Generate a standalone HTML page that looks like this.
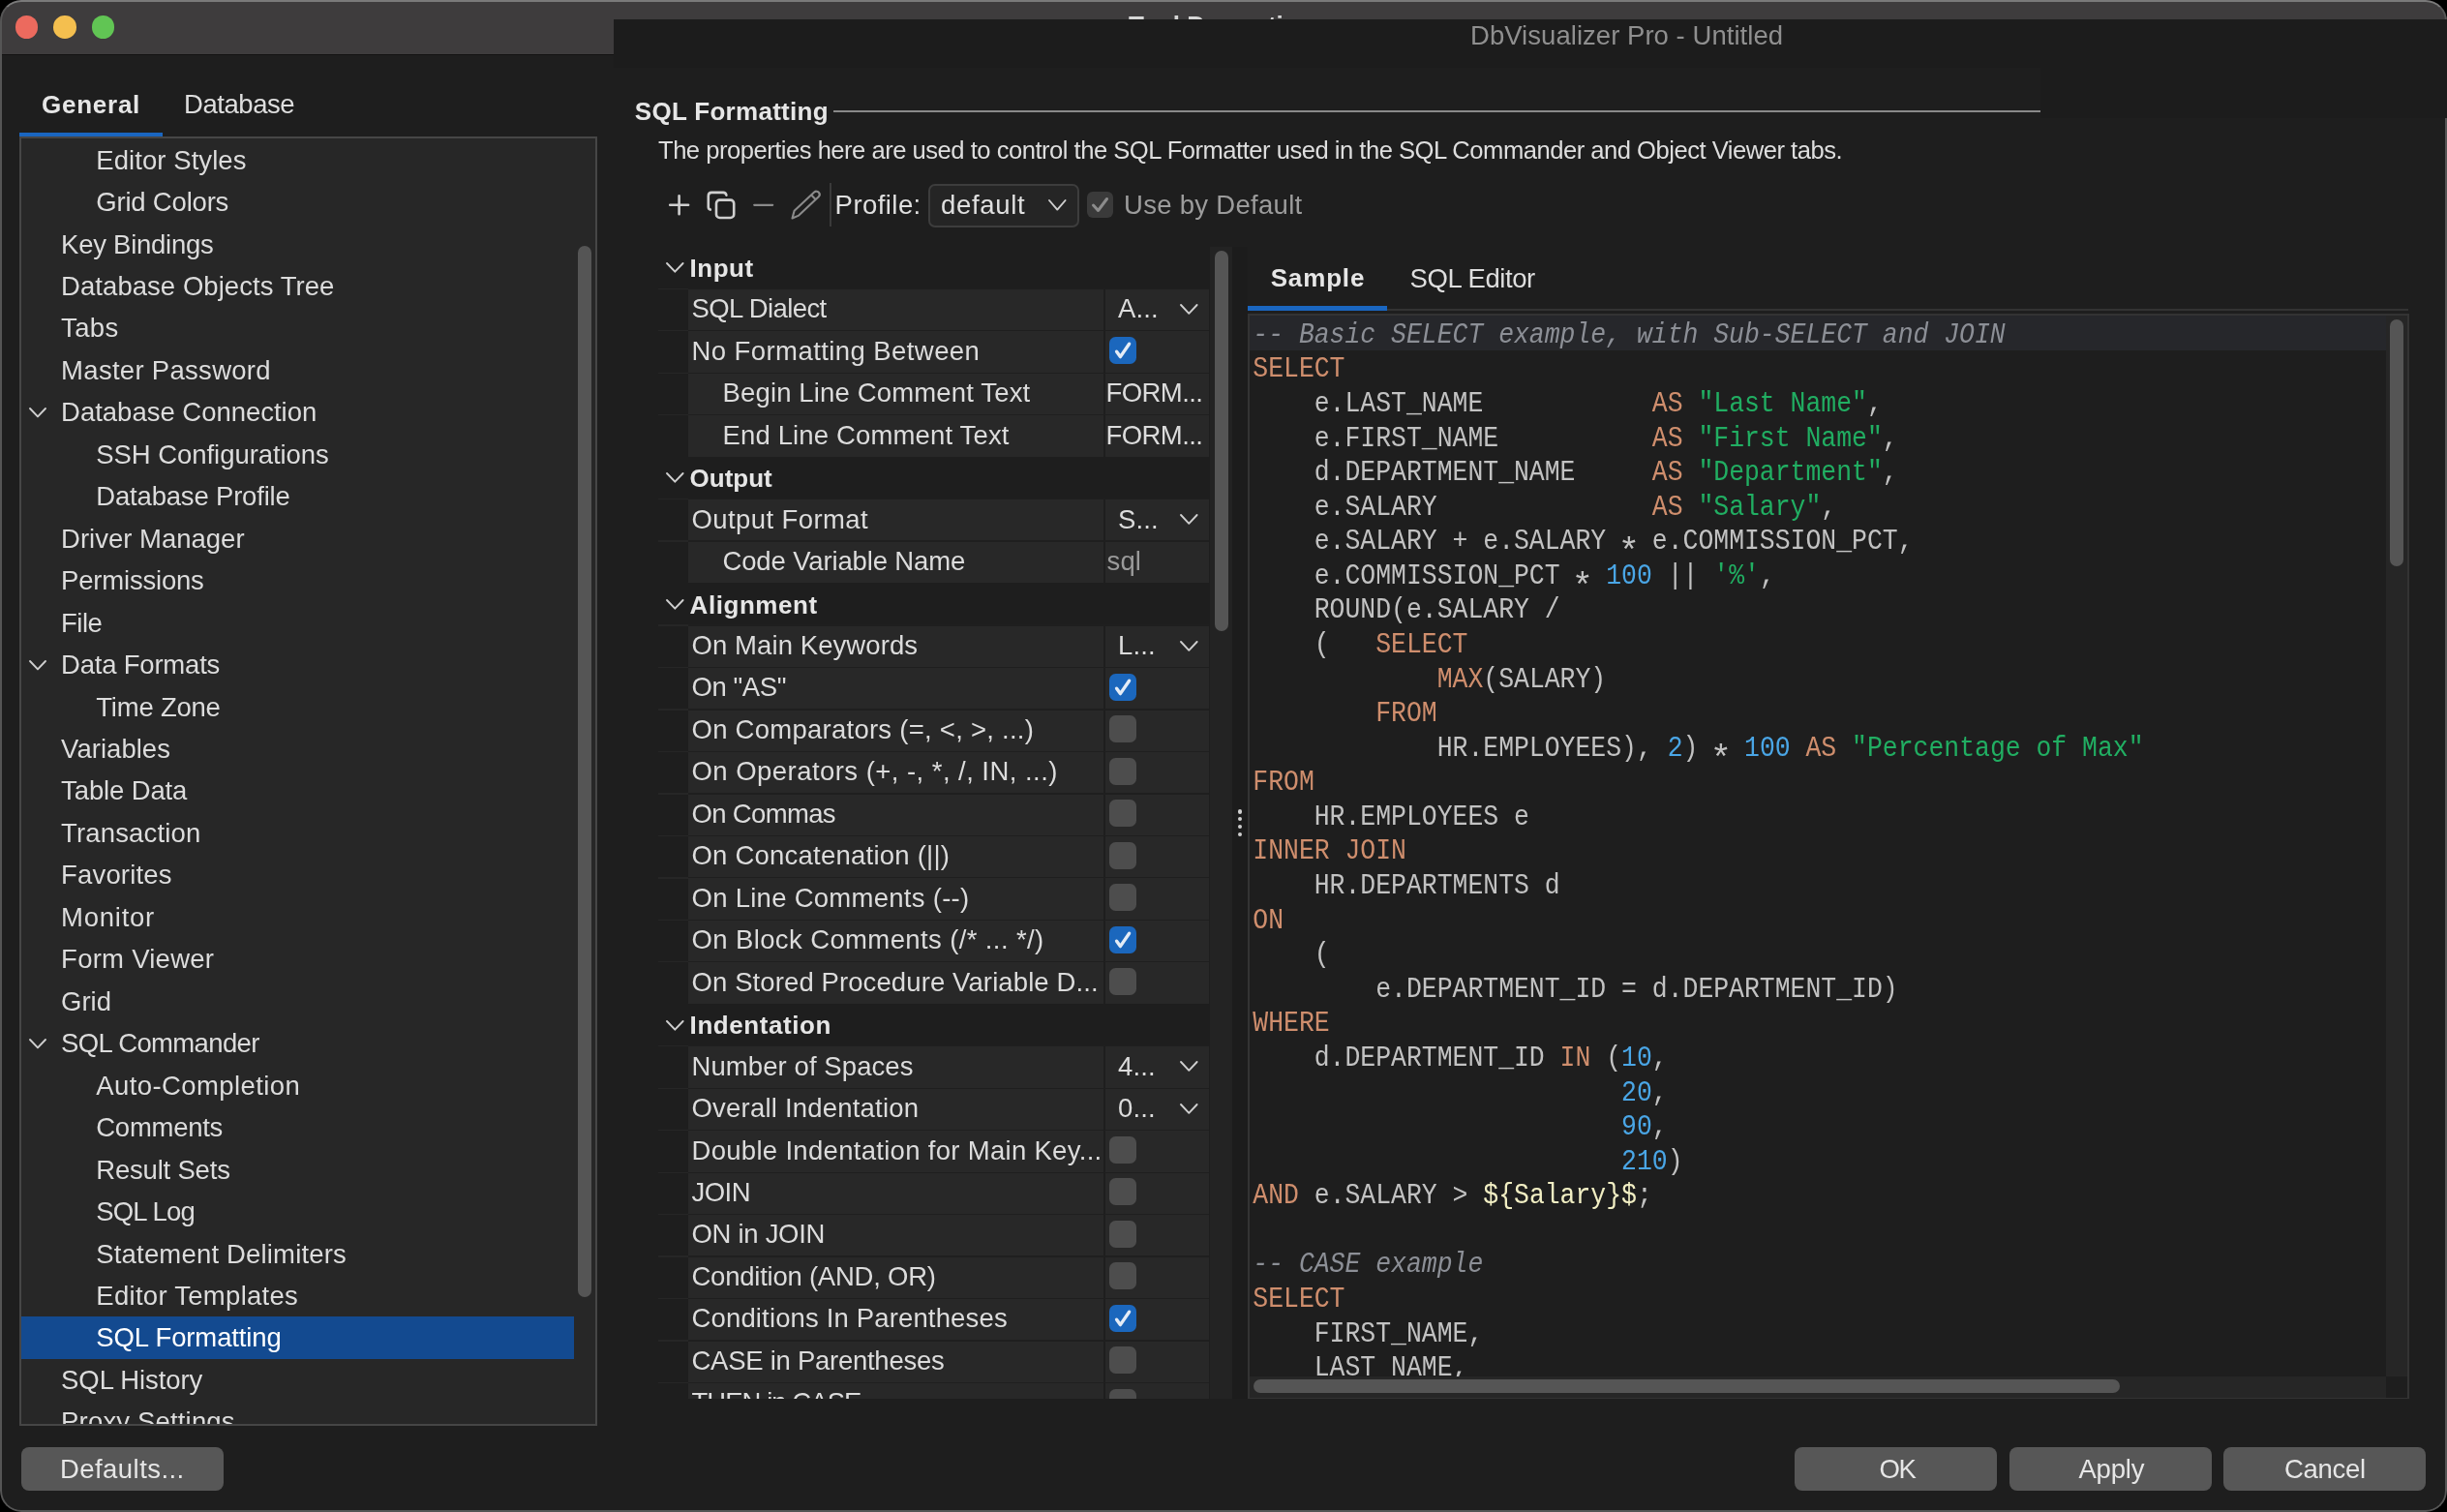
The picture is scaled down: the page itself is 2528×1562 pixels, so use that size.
<!DOCTYPE html>
<html><head><meta charset="utf-8"><title>Tool Properties</title>
<style>
html,body{margin:0;padding:0;background:#000;width:2528px;height:1562px;overflow:hidden}
.win{position:absolute;left:0;top:0;width:2528px;height:1562px;border-radius:22px;overflow:hidden;background:#1e1e1e;will-change:transform}
.t{position:absolute;white-space:pre;font-family:"Liberation Sans", sans-serif}
.r{position:absolute}
.m{position:absolute;white-space:pre;font-family:"Liberation Mono", monospace}
</style></head><body><div class="win">
<div class="r" style="left:0.00px;top:0.00px;width:2528.00px;height:55.50px;background:#3e3c3d;"></div>
<div class="r" style="left:0.00px;top:55.50px;width:634.00px;height:1.20px;background:#121212;"></div>
<div class="t" style="left:1166.00px;top:10.09px;font-size:26px;line-height:33.8px;color:#d6d6d6;font-weight:700;letter-spacing:0px;">Tool Properties</div>
<div class="r" style="left:15.80px;top:16.20px;width:23.6px;height:23.6px;border-radius:50%;background:#ec6a5e"></div>
<div class="r" style="left:55.40px;top:16.20px;width:23.6px;height:23.6px;border-radius:50%;background:#f4bf4f"></div>
<div class="r" style="left:94.80px;top:16.20px;width:23.6px;height:23.6px;border-radius:50%;background:#61c554"></div>
<div class="r" style="left:634.00px;top:20.00px;width:1894.00px;height:50.00px;background:#1c1c1c;"></div>
<div class="r" style="left:2108.00px;top:70.00px;width:420.00px;height:52.00px;background:#1c1c1c;"></div>
<div class="t" style="left:1519.00px;top:19.39px;font-size:27.5px;line-height:35.75px;color:#8f8f8f;font-weight:400;letter-spacing:0.04px;">DbVisualizer Pro - Untitled</div>
<div class="t" style="left:43.00px;top:91.69px;font-size:26px;line-height:33.8px;color:#e6e6e6;font-weight:700;letter-spacing:0.75px;">General</div>
<div class="t" style="left:190.00px;top:90.19px;font-size:27.5px;line-height:35.75px;color:#dedede;font-weight:400;letter-spacing:-0.44px;">Database</div>
<div class="r" style="left:19.60px;top:136.50px;width:148.00px;height:4.50px;background:#1a66c0;"></div>
<div class="r" style="left:19.6px;top:140.8px;width:597px;height:1332.2px;box-sizing:border-box;border:2.1px solid #464646;background:#272727;overflow:hidden">
<div class="t" style="left:77.70px;top:4.79px;font-size:27.5px;line-height:35.75px;color:#dcdcdc;font-weight:400;letter-spacing:0.066px;">Editor Styles</div>
<div class="t" style="left:77.70px;top:48.25px;font-size:27.5px;line-height:35.75px;color:#dcdcdc;font-weight:400;letter-spacing:-0.2px;">Grid Colors</div>
<div class="t" style="left:41.50px;top:91.71px;font-size:27.5px;line-height:35.75px;color:#dcdcdc;font-weight:400;letter-spacing:-0.258px;">Key Bindings</div>
<div class="t" style="left:41.50px;top:135.17px;font-size:27.5px;line-height:35.75px;color:#dcdcdc;font-weight:400;letter-spacing:0.05px;">Database Objects Tree</div>
<div class="t" style="left:41.50px;top:178.63px;font-size:27.5px;line-height:35.75px;color:#dcdcdc;font-weight:400;letter-spacing:0.315px;">Tabs</div>
<div class="t" style="left:41.50px;top:222.09px;font-size:27.5px;line-height:35.75px;color:#dcdcdc;font-weight:400;letter-spacing:0.292px;">Master Password</div>
<div class="t" style="left:41.50px;top:265.55px;font-size:27.5px;line-height:35.75px;color:#dcdcdc;font-weight:400;letter-spacing:-0.017px;">Database Connection</div>
<svg class="r" style="left:7.10px;top:277.36px" width="20" height="12.4" viewBox="-2 -2 20 12.4"><path d="M0 0 L8.0 8.4 L16 0" fill="none" stroke="#cfcfcf" stroke-width="1.9" stroke-linecap="round" stroke-linejoin="round"/></svg>
<div class="t" style="left:77.70px;top:309.01px;font-size:27.5px;line-height:35.75px;color:#dcdcdc;font-weight:400;letter-spacing:-0.057px;">SSH Configurations</div>
<div class="t" style="left:77.70px;top:352.47px;font-size:27.5px;line-height:35.75px;color:#dcdcdc;font-weight:400;letter-spacing:-0.184px;">Database Profile</div>
<div class="t" style="left:41.50px;top:395.93px;font-size:27.5px;line-height:35.75px;color:#dcdcdc;font-weight:400;letter-spacing:-0.002px;">Driver Manager</div>
<div class="t" style="left:41.50px;top:439.39px;font-size:27.5px;line-height:35.75px;color:#dcdcdc;font-weight:400;letter-spacing:-0.2px;">Permissions</div>
<div class="t" style="left:41.50px;top:482.85px;font-size:27.5px;line-height:35.75px;color:#dcdcdc;font-weight:400;letter-spacing:-0.517px;">File</div>
<div class="t" style="left:41.50px;top:526.31px;font-size:27.5px;line-height:35.75px;color:#dcdcdc;font-weight:400;letter-spacing:-0.214px;">Data Formats</div>
<svg class="r" style="left:7.10px;top:538.12px" width="20" height="12.4" viewBox="-2 -2 20 12.4"><path d="M0 0 L8.0 8.4 L16 0" fill="none" stroke="#cfcfcf" stroke-width="1.9" stroke-linecap="round" stroke-linejoin="round"/></svg>
<div class="t" style="left:77.70px;top:569.77px;font-size:27.5px;line-height:35.75px;color:#dcdcdc;font-weight:400;letter-spacing:-0.225px;">Time Zone</div>
<div class="t" style="left:41.50px;top:613.23px;font-size:27.5px;line-height:35.75px;color:#dcdcdc;font-weight:400;letter-spacing:0.025px;">Variables</div>
<div class="t" style="left:41.50px;top:656.69px;font-size:27.5px;line-height:35.75px;color:#dcdcdc;font-weight:400;letter-spacing:-0.129px;">Table Data</div>
<div class="t" style="left:41.50px;top:700.15px;font-size:27.5px;line-height:35.75px;color:#dcdcdc;font-weight:400;letter-spacing:0.15px;">Transaction</div>
<div class="t" style="left:41.50px;top:743.61px;font-size:27.5px;line-height:35.75px;color:#dcdcdc;font-weight:400;letter-spacing:0.15px;">Favorites</div>
<div class="t" style="left:41.50px;top:787.07px;font-size:27.5px;line-height:35.75px;color:#dcdcdc;font-weight:400;letter-spacing:0.734px;">Monitor</div>
<div class="t" style="left:41.50px;top:830.53px;font-size:27.5px;line-height:35.75px;color:#dcdcdc;font-weight:400;letter-spacing:0.25px;">Form Viewer</div>
<div class="t" style="left:41.50px;top:873.99px;font-size:27.5px;line-height:35.75px;color:#dcdcdc;font-weight:400;letter-spacing:-0.016px;">Grid</div>
<div class="t" style="left:41.50px;top:917.45px;font-size:27.5px;line-height:35.75px;color:#dcdcdc;font-weight:400;letter-spacing:-0.642px;">SQL Commander</div>
<svg class="r" style="left:7.10px;top:929.26px" width="20" height="12.4" viewBox="-2 -2 20 12.4"><path d="M0 0 L8.0 8.4 L16 0" fill="none" stroke="#cfcfcf" stroke-width="1.9" stroke-linecap="round" stroke-linejoin="round"/></svg>
<div class="t" style="left:77.70px;top:960.91px;font-size:27.5px;line-height:35.75px;color:#dcdcdc;font-weight:400;letter-spacing:0.4px;">Auto-Completion</div>
<div class="t" style="left:77.70px;top:1004.37px;font-size:27.5px;line-height:35.75px;color:#dcdcdc;font-weight:400;letter-spacing:-0.278px;">Comments</div>
<div class="t" style="left:77.70px;top:1047.83px;font-size:27.5px;line-height:35.75px;color:#dcdcdc;font-weight:400;letter-spacing:-0.2px;">Result Sets</div>
<div class="t" style="left:77.70px;top:1091.29px;font-size:27.5px;line-height:35.75px;color:#dcdcdc;font-weight:400;letter-spacing:-0.849px;">SQL Log</div>
<div class="t" style="left:77.70px;top:1134.75px;font-size:27.5px;line-height:35.75px;color:#dcdcdc;font-weight:400;letter-spacing:0.176px;">Statement Delimiters</div>
<div class="t" style="left:77.70px;top:1178.21px;font-size:27.5px;line-height:35.75px;color:#dcdcdc;font-weight:400;letter-spacing:0.284px;">Editor Templates</div>
<div class="r" style="left:-0.40px;top:1217.08px;width:571.70px;height:44.00px;background:#134a90;"></div>
<div class="t" style="left:77.70px;top:1221.67px;font-size:27.5px;line-height:35.75px;color:#ffffff;font-weight:400;letter-spacing:-0.118px;">SQL Formatting</div>
<div class="t" style="left:41.50px;top:1265.13px;font-size:27.5px;line-height:35.75px;color:#dcdcdc;font-weight:400;letter-spacing:-0.1px;">SQL History</div>
<div class="t" style="left:41.50px;top:1308.59px;font-size:27.5px;line-height:35.75px;color:#dcdcdc;font-weight:400;letter-spacing:0.166px;">Proxy Settings</div>
<div class="r" style="left:575.30px;top:111.60px;width:14.00px;height:1085.50px;background:#555555;border-radius:7px"></div>
</div>
<div class="t" style="left:655.80px;top:99.09px;font-size:26px;line-height:33.8px;color:#e6e6e6;font-weight:700;letter-spacing:0.3px;">SQL Formatting</div>
<div class="r" style="left:861.00px;top:113.50px;width:1247.00px;height:2.00px;background:#8a8a8a;"></div>
<div class="t" style="left:680.00px;top:138.79px;font-size:25.6px;line-height:33.28px;color:#dedede;font-weight:400;letter-spacing:-0.5px;">The properties here are used to control the SQL Formatter used in the SQL Commander and Object Viewer tabs.</div>
<svg class="r" style="left:670px;top:180px" width="230" height="60" viewBox="0 0 230 60">
<path d="M31.6 22.3 V41.2 M22.2 31.7 H41.1" stroke="#cfcfcf" stroke-width="2.6" stroke-linecap="round"/>
<rect x="70" y="26.6" width="18.2" height="18.4" rx="3.6" fill="none" stroke="#cfcfcf" stroke-width="2.6"/>
<path d="M63.8 36.6 C62.4 36.2 61.8 35.4 61.8 34 V22.4 C61.8 20.2 63 18.9 65.2 18.9 H77.2 C79 18.9 80.1 19.8 80.4 21.6" fill="none" stroke="#cfcfcf" stroke-width="2.6" stroke-linecap="round"/>
<path d="M109.2 31.8 H128.2" stroke="#8a8a8a" stroke-width="2.2" stroke-linecap="round"/>
<path d="M148.5 45.5 L150.6 37.8 L171.2 18.6 C172.6 17.3 174.6 17.4 175.8 18.7 C177.1 20.1 177 22 175.7 23.3 L155.2 42.6 Z M168.2 21.5 L172.8 26.2" fill="none" stroke="#8a8a8a" stroke-width="2.1" stroke-linejoin="round"/>
</svg>
<div class="r" style="left:857.00px;top:189.00px;width:2.00px;height:45.00px;background:#3a3a3a;"></div>
<div class="t" style="left:862.60px;top:194.29px;font-size:27.5px;line-height:35.75px;color:#e0e0e0;font-weight:400;letter-spacing:0.44px;">Profile:</div>
<div class="r" style="left:958.8px;top:190.4px;width:156px;height:45px;box-sizing:border-box;border:2px solid #3d3d3d;border-radius:7px;background:#252525"></div>
<div class="t" style="left:972.00px;top:194.29px;font-size:27.5px;line-height:35.75px;color:#e0e0e0;font-weight:400;letter-spacing:0.67px;">default</div>
<svg class="r" style="left:1081.80px;top:205.20px" width="20.6" height="13.6" viewBox="-2 -2 20.6 13.6"><path d="M0 0 L8.3 9.6 L16.6 0" fill="none" stroke="#cfcfcf" stroke-width="1.9" stroke-linecap="round" stroke-linejoin="round"/></svg>
<svg class="r" style="left:1123px;top:198.3px" width="27" height="27" viewBox="0 0 27 27"><rect width="27" height="27" rx="6" fill="#3a3a3a"/><path d="M6.5 14 L11.5 19.5 L20.5 7.5" fill="none" stroke="#8c8c8c" stroke-width="3" stroke-linecap="round" stroke-linejoin="round"/></svg>
<div class="t" style="left:1161.00px;top:194.29px;font-size:27.5px;line-height:35.75px;color:#9c9c9c;font-weight:400;letter-spacing:0.3px;">Use by Default</div>
<div class="r" style="left:680px;top:254.8px;width:570px;height:1190.4px;overflow:hidden;background:#1e1e1e">
<svg class="r" style="left:6.80px;top:15.30px" width="20.6" height="12.7" viewBox="-2 -2 20.6 12.7"><path d="M0 0 L8.3 8.7 L16.6 0" fill="none" stroke="#cfcfcf" stroke-width="1.9" stroke-linecap="round" stroke-linejoin="round"/></svg>
<div class="t" style="left:32.60px;top:6.09px;font-size:26px;line-height:33.8px;color:#e6e6e6;font-weight:700;letter-spacing:0.5px;">Input</div>
<div class="r" style="left:0.00px;top:42.87px;width:31.30px;height:1.30px;background:#262626;"></div>
<div class="r" style="left:31.30px;top:42.87px;width:537.60px;height:1.30px;background:#1f1f1f;"></div>
<div class="r" style="left:31.30px;top:44.07px;width:429.00px;height:42.27px;background:#282828;"></div>
<div class="r" style="left:461.70px;top:44.07px;width:107.20px;height:42.27px;background:#282828;"></div>
<div class="t" style="left:34.50px;top:46.36px;font-size:27.5px;line-height:35.75px;color:#dcdcdc;font-weight:400;letter-spacing:-0.6px;">SQL Dialect</div>
<div class="t" style="left:475.00px;top:46.36px;font-size:27.5px;line-height:35.75px;color:#dcdcdc;font-weight:400;letter-spacing:0.15px;">A...</div>
<svg class="r" style="left:537.80px;top:58.07px" width="20.6" height="12.8" viewBox="-2 -2 20.6 12.8"><path d="M0 0 L8.3 8.8 L16.6 0" fill="none" stroke="#cfcfcf" stroke-width="1.9" stroke-linecap="round" stroke-linejoin="round"/></svg>
<div class="r" style="left:0.00px;top:86.34px;width:31.30px;height:1.30px;background:#262626;"></div>
<div class="r" style="left:31.30px;top:86.34px;width:537.60px;height:1.30px;background:#1f1f1f;"></div>
<div class="r" style="left:31.30px;top:87.54px;width:429.00px;height:42.27px;background:#282828;"></div>
<div class="r" style="left:461.70px;top:87.54px;width:107.20px;height:42.27px;background:#282828;"></div>
<div class="t" style="left:34.50px;top:89.83px;font-size:27.5px;line-height:35.75px;color:#dcdcdc;font-weight:400;letter-spacing:0.425px;">No Formatting Between</div>
<svg class="r" style="left:466.20000000000005px;top:93.14px" width="28" height="28" viewBox="0 0 28 28"><rect x="0" y="0" width="28" height="28" rx="6.5" fill="#1b67bd"/><path d="M7.6 15.2 L11.4 20.6 L20.6 7.2" fill="none" stroke="#e4ecf6" stroke-width="3.4" stroke-linecap="round" stroke-linejoin="round"/></svg>
<div class="r" style="left:0.00px;top:129.81px;width:31.30px;height:1.30px;background:#262626;"></div>
<div class="r" style="left:31.30px;top:129.81px;width:537.60px;height:1.30px;background:#1f1f1f;"></div>
<div class="r" style="left:31.30px;top:131.01px;width:429.00px;height:42.27px;background:#282828;"></div>
<div class="r" style="left:461.70px;top:131.01px;width:107.20px;height:42.27px;background:#282828;"></div>
<div class="t" style="left:66.50px;top:133.30px;font-size:27.5px;line-height:35.75px;color:#dcdcdc;font-weight:400;letter-spacing:0.15px;">Begin Line Comment Text</div>
<div class="t" style="left:462.50px;top:133.30px;font-size:27.5px;line-height:35.75px;color:#dcdcdc;font-weight:400;letter-spacing:-0.57px;">FORM...</div>
<div class="r" style="left:0.00px;top:173.28px;width:31.30px;height:1.30px;background:#262626;"></div>
<div class="r" style="left:31.30px;top:173.28px;width:537.60px;height:1.30px;background:#1f1f1f;"></div>
<div class="r" style="left:31.30px;top:174.48px;width:429.00px;height:42.27px;background:#282828;"></div>
<div class="r" style="left:461.70px;top:174.48px;width:107.20px;height:42.27px;background:#282828;"></div>
<div class="t" style="left:66.50px;top:176.77px;font-size:27.5px;line-height:35.75px;color:#dcdcdc;font-weight:400;letter-spacing:0.15px;">End Line Comment Text</div>
<div class="t" style="left:462.50px;top:176.77px;font-size:27.5px;line-height:35.75px;color:#dcdcdc;font-weight:400;letter-spacing:-0.57px;">FORM...</div>
<svg class="r" style="left:6.80px;top:232.65px" width="20.6" height="12.7" viewBox="-2 -2 20.6 12.7"><path d="M0 0 L8.3 8.7 L16.6 0" fill="none" stroke="#cfcfcf" stroke-width="1.9" stroke-linecap="round" stroke-linejoin="round"/></svg>
<div class="t" style="left:32.60px;top:223.44px;font-size:26px;line-height:33.8px;color:#e6e6e6;font-weight:700;letter-spacing:0.0px;">Output</div>
<div class="r" style="left:0.00px;top:260.22px;width:31.30px;height:1.30px;background:#262626;"></div>
<div class="r" style="left:31.30px;top:260.22px;width:537.60px;height:1.30px;background:#1f1f1f;"></div>
<div class="r" style="left:31.30px;top:261.42px;width:429.00px;height:42.27px;background:#282828;"></div>
<div class="r" style="left:461.70px;top:261.42px;width:107.20px;height:42.27px;background:#282828;"></div>
<div class="t" style="left:34.50px;top:263.71px;font-size:27.5px;line-height:35.75px;color:#dcdcdc;font-weight:400;letter-spacing:0.399px;">Output Format</div>
<div class="t" style="left:475.00px;top:263.71px;font-size:27.5px;line-height:35.75px;color:#dcdcdc;font-weight:400;letter-spacing:0.15px;">S...</div>
<svg class="r" style="left:537.80px;top:275.42px" width="20.6" height="12.8" viewBox="-2 -2 20.6 12.8"><path d="M0 0 L8.3 8.8 L16.6 0" fill="none" stroke="#cfcfcf" stroke-width="1.9" stroke-linecap="round" stroke-linejoin="round"/></svg>
<div class="r" style="left:0.00px;top:303.69px;width:31.30px;height:1.30px;background:#262626;"></div>
<div class="r" style="left:31.30px;top:303.69px;width:537.60px;height:1.30px;background:#1f1f1f;"></div>
<div class="r" style="left:31.30px;top:304.89px;width:429.00px;height:42.27px;background:#282828;"></div>
<div class="r" style="left:461.70px;top:304.89px;width:107.20px;height:42.27px;background:#282828;"></div>
<div class="t" style="left:66.50px;top:307.18px;font-size:27.5px;line-height:35.75px;color:#dcdcdc;font-weight:400;letter-spacing:-0.146px;">Code Variable Name</div>
<div class="t" style="left:463.50px;top:307.18px;font-size:27.5px;line-height:35.75px;color:#9a9a9a;font-weight:400;letter-spacing:0.15px;">sql</div>
<svg class="r" style="left:6.80px;top:363.06px" width="20.6" height="12.7" viewBox="-2 -2 20.6 12.7"><path d="M0 0 L8.3 8.7 L16.6 0" fill="none" stroke="#cfcfcf" stroke-width="1.9" stroke-linecap="round" stroke-linejoin="round"/></svg>
<div class="t" style="left:32.60px;top:353.85px;font-size:26px;line-height:33.8px;color:#e6e6e6;font-weight:700;letter-spacing:0.55px;">Alignment</div>
<div class="r" style="left:0.00px;top:390.63px;width:31.30px;height:1.30px;background:#262626;"></div>
<div class="r" style="left:31.30px;top:390.63px;width:537.60px;height:1.30px;background:#1f1f1f;"></div>
<div class="r" style="left:31.30px;top:391.83px;width:429.00px;height:42.27px;background:#282828;"></div>
<div class="r" style="left:461.70px;top:391.83px;width:107.20px;height:42.27px;background:#282828;"></div>
<div class="t" style="left:34.50px;top:394.12px;font-size:27.5px;line-height:35.75px;color:#dcdcdc;font-weight:400;letter-spacing:0.082px;">On Main Keywords</div>
<div class="t" style="left:475.00px;top:394.12px;font-size:27.5px;line-height:35.75px;color:#dcdcdc;font-weight:400;letter-spacing:0.15px;">L...</div>
<svg class="r" style="left:537.80px;top:405.83px" width="20.6" height="12.8" viewBox="-2 -2 20.6 12.8"><path d="M0 0 L8.3 8.8 L16.6 0" fill="none" stroke="#cfcfcf" stroke-width="1.9" stroke-linecap="round" stroke-linejoin="round"/></svg>
<div class="r" style="left:0.00px;top:434.10px;width:31.30px;height:1.30px;background:#262626;"></div>
<div class="r" style="left:31.30px;top:434.10px;width:537.60px;height:1.30px;background:#1f1f1f;"></div>
<div class="r" style="left:31.30px;top:435.30px;width:429.00px;height:42.27px;background:#282828;"></div>
<div class="r" style="left:461.70px;top:435.30px;width:107.20px;height:42.27px;background:#282828;"></div>
<div class="t" style="left:34.50px;top:437.59px;font-size:27.5px;line-height:35.75px;color:#dcdcdc;font-weight:400;letter-spacing:-0.433px;">On "AS"</div>
<svg class="r" style="left:466.20000000000005px;top:440.9px" width="28" height="28" viewBox="0 0 28 28"><rect x="0" y="0" width="28" height="28" rx="6.5" fill="#1b67bd"/><path d="M7.6 15.2 L11.4 20.6 L20.6 7.2" fill="none" stroke="#e4ecf6" stroke-width="3.4" stroke-linecap="round" stroke-linejoin="round"/></svg>
<div class="r" style="left:0.00px;top:477.57px;width:31.30px;height:1.30px;background:#262626;"></div>
<div class="r" style="left:31.30px;top:477.57px;width:537.60px;height:1.30px;background:#1f1f1f;"></div>
<div class="r" style="left:31.30px;top:478.77px;width:429.00px;height:42.27px;background:#282828;"></div>
<div class="r" style="left:461.70px;top:478.77px;width:107.20px;height:42.27px;background:#282828;"></div>
<div class="t" style="left:34.50px;top:481.06px;font-size:27.5px;line-height:35.75px;color:#dcdcdc;font-weight:400;letter-spacing:0.258px;">On Comparators (=, &lt;, &gt;, ...)</div>
<div class="r" style="left:466.20000000000005px;top:484.37px;width:28px;height:28px;background:#4d4d4d;border-radius:6.5px"></div>
<div class="r" style="left:0.00px;top:521.04px;width:31.30px;height:1.30px;background:#262626;"></div>
<div class="r" style="left:31.30px;top:521.04px;width:537.60px;height:1.30px;background:#1f1f1f;"></div>
<div class="r" style="left:31.30px;top:522.24px;width:429.00px;height:42.27px;background:#282828;"></div>
<div class="r" style="left:461.70px;top:522.24px;width:107.20px;height:42.27px;background:#282828;"></div>
<div class="t" style="left:34.50px;top:524.53px;font-size:27.5px;line-height:35.75px;color:#dcdcdc;font-weight:400;letter-spacing:0.453px;">On Operators (+, -, *, /, IN, ...)</div>
<div class="r" style="left:466.20000000000005px;top:527.84px;width:28px;height:28px;background:#4d4d4d;border-radius:6.5px"></div>
<div class="r" style="left:0.00px;top:564.51px;width:31.30px;height:1.30px;background:#262626;"></div>
<div class="r" style="left:31.30px;top:564.51px;width:537.60px;height:1.30px;background:#1f1f1f;"></div>
<div class="r" style="left:31.30px;top:565.71px;width:429.00px;height:42.27px;background:#282828;"></div>
<div class="r" style="left:461.70px;top:565.71px;width:107.20px;height:42.27px;background:#282828;"></div>
<div class="t" style="left:34.50px;top:568.00px;font-size:27.5px;line-height:35.75px;color:#dcdcdc;font-weight:400;letter-spacing:-0.665px;">On Commas</div>
<div class="r" style="left:466.20000000000005px;top:571.31px;width:28px;height:28px;background:#4d4d4d;border-radius:6.5px"></div>
<div class="r" style="left:0.00px;top:607.98px;width:31.30px;height:1.30px;background:#262626;"></div>
<div class="r" style="left:31.30px;top:607.98px;width:537.60px;height:1.30px;background:#1f1f1f;"></div>
<div class="r" style="left:31.30px;top:609.18px;width:429.00px;height:42.27px;background:#282828;"></div>
<div class="r" style="left:461.70px;top:609.18px;width:107.20px;height:42.27px;background:#282828;"></div>
<div class="t" style="left:34.50px;top:611.47px;font-size:27.5px;line-height:35.75px;color:#dcdcdc;font-weight:400;letter-spacing:0.225px;">On Concatenation (||)</div>
<div class="r" style="left:466.20000000000005px;top:614.78px;width:28px;height:28px;background:#4d4d4d;border-radius:6.5px"></div>
<div class="r" style="left:0.00px;top:651.45px;width:31.30px;height:1.30px;background:#262626;"></div>
<div class="r" style="left:31.30px;top:651.45px;width:537.60px;height:1.30px;background:#1f1f1f;"></div>
<div class="r" style="left:31.30px;top:652.65px;width:429.00px;height:42.27px;background:#282828;"></div>
<div class="r" style="left:461.70px;top:652.65px;width:107.20px;height:42.27px;background:#282828;"></div>
<div class="t" style="left:34.50px;top:654.94px;font-size:27.5px;line-height:35.75px;color:#dcdcdc;font-weight:400;letter-spacing:0.275px;">On Line Comments (--)</div>
<div class="r" style="left:466.20000000000005px;top:658.25px;width:28px;height:28px;background:#4d4d4d;border-radius:6.5px"></div>
<div class="r" style="left:0.00px;top:694.92px;width:31.30px;height:1.30px;background:#262626;"></div>
<div class="r" style="left:31.30px;top:694.92px;width:537.60px;height:1.30px;background:#1f1f1f;"></div>
<div class="r" style="left:31.30px;top:696.12px;width:429.00px;height:42.27px;background:#282828;"></div>
<div class="r" style="left:461.70px;top:696.12px;width:107.20px;height:42.27px;background:#282828;"></div>
<div class="t" style="left:34.50px;top:698.41px;font-size:27.5px;line-height:35.75px;color:#dcdcdc;font-weight:400;letter-spacing:0.382px;">On Block Comments (/* ... */)</div>
<svg class="r" style="left:466.20000000000005px;top:701.72px" width="28" height="28" viewBox="0 0 28 28"><rect x="0" y="0" width="28" height="28" rx="6.5" fill="#1b67bd"/><path d="M7.6 15.2 L11.4 20.6 L20.6 7.2" fill="none" stroke="#e4ecf6" stroke-width="3.4" stroke-linecap="round" stroke-linejoin="round"/></svg>
<div class="r" style="left:0.00px;top:738.39px;width:31.30px;height:1.30px;background:#262626;"></div>
<div class="r" style="left:31.30px;top:738.39px;width:537.60px;height:1.30px;background:#1f1f1f;"></div>
<div class="r" style="left:31.30px;top:739.59px;width:429.00px;height:42.27px;background:#282828;"></div>
<div class="r" style="left:461.70px;top:739.59px;width:107.20px;height:42.27px;background:#282828;"></div>
<div class="t" style="left:34.50px;top:741.88px;font-size:27.5px;line-height:35.75px;color:#dcdcdc;font-weight:400;letter-spacing:0.103px;">On Stored Procedure Variable D...</div>
<div class="r" style="left:466.20000000000005px;top:745.19px;width:28px;height:28px;background:#4d4d4d;border-radius:6.5px"></div>
<svg class="r" style="left:6.80px;top:797.76px" width="20.6" height="12.7" viewBox="-2 -2 20.6 12.7"><path d="M0 0 L8.3 8.7 L16.6 0" fill="none" stroke="#cfcfcf" stroke-width="1.9" stroke-linecap="round" stroke-linejoin="round"/></svg>
<div class="t" style="left:32.60px;top:788.55px;font-size:26px;line-height:33.8px;color:#e6e6e6;font-weight:700;letter-spacing:0.57px;">Indentation</div>
<div class="r" style="left:0.00px;top:825.33px;width:31.30px;height:1.30px;background:#262626;"></div>
<div class="r" style="left:31.30px;top:825.33px;width:537.60px;height:1.30px;background:#1f1f1f;"></div>
<div class="r" style="left:31.30px;top:826.53px;width:429.00px;height:42.27px;background:#282828;"></div>
<div class="r" style="left:461.70px;top:826.53px;width:107.20px;height:42.27px;background:#282828;"></div>
<div class="t" style="left:34.50px;top:828.82px;font-size:27.5px;line-height:35.75px;color:#dcdcdc;font-weight:400;letter-spacing:0.083px;">Number of Spaces</div>
<div class="t" style="left:475.00px;top:828.82px;font-size:27.5px;line-height:35.75px;color:#dcdcdc;font-weight:400;letter-spacing:0.15px;">4...</div>
<svg class="r" style="left:537.80px;top:840.53px" width="20.6" height="12.8" viewBox="-2 -2 20.6 12.8"><path d="M0 0 L8.3 8.8 L16.6 0" fill="none" stroke="#cfcfcf" stroke-width="1.9" stroke-linecap="round" stroke-linejoin="round"/></svg>
<div class="r" style="left:0.00px;top:868.80px;width:31.30px;height:1.30px;background:#262626;"></div>
<div class="r" style="left:31.30px;top:868.80px;width:537.60px;height:1.30px;background:#1f1f1f;"></div>
<div class="r" style="left:31.30px;top:870.00px;width:429.00px;height:42.27px;background:#282828;"></div>
<div class="r" style="left:461.70px;top:870.00px;width:107.20px;height:42.27px;background:#282828;"></div>
<div class="t" style="left:34.50px;top:872.29px;font-size:27.5px;line-height:35.75px;color:#dcdcdc;font-weight:400;letter-spacing:0.206px;">Overall Indentation</div>
<div class="t" style="left:475.00px;top:872.29px;font-size:27.5px;line-height:35.75px;color:#dcdcdc;font-weight:400;letter-spacing:0.15px;">0...</div>
<svg class="r" style="left:537.80px;top:884.00px" width="20.6" height="12.8" viewBox="-2 -2 20.6 12.8"><path d="M0 0 L8.3 8.8 L16.6 0" fill="none" stroke="#cfcfcf" stroke-width="1.9" stroke-linecap="round" stroke-linejoin="round"/></svg>
<div class="r" style="left:0.00px;top:912.27px;width:31.30px;height:1.30px;background:#262626;"></div>
<div class="r" style="left:31.30px;top:912.27px;width:537.60px;height:1.30px;background:#1f1f1f;"></div>
<div class="r" style="left:31.30px;top:913.47px;width:429.00px;height:42.27px;background:#282828;"></div>
<div class="r" style="left:461.70px;top:913.47px;width:107.20px;height:42.27px;background:#282828;"></div>
<div class="t" style="left:34.50px;top:915.76px;font-size:27.5px;line-height:35.75px;color:#dcdcdc;font-weight:400;letter-spacing:0.302px;">Double Indentation for Main Key...</div>
<div class="r" style="left:466.20000000000005px;top:919.07px;width:28px;height:28px;background:#4d4d4d;border-radius:6.5px"></div>
<div class="r" style="left:0.00px;top:955.74px;width:31.30px;height:1.30px;background:#262626;"></div>
<div class="r" style="left:31.30px;top:955.74px;width:537.60px;height:1.30px;background:#1f1f1f;"></div>
<div class="r" style="left:31.30px;top:956.94px;width:429.00px;height:42.27px;background:#282828;"></div>
<div class="r" style="left:461.70px;top:956.94px;width:107.20px;height:42.27px;background:#282828;"></div>
<div class="t" style="left:34.50px;top:959.23px;font-size:27.5px;line-height:35.75px;color:#dcdcdc;font-weight:400;letter-spacing:-0.518px;">JOIN</div>
<div class="r" style="left:466.20000000000005px;top:962.54px;width:28px;height:28px;background:#4d4d4d;border-radius:6.5px"></div>
<div class="r" style="left:0.00px;top:999.21px;width:31.30px;height:1.30px;background:#262626;"></div>
<div class="r" style="left:31.30px;top:999.21px;width:537.60px;height:1.30px;background:#1f1f1f;"></div>
<div class="r" style="left:31.30px;top:1000.41px;width:429.00px;height:42.27px;background:#282828;"></div>
<div class="r" style="left:461.70px;top:1000.41px;width:107.20px;height:42.27px;background:#282828;"></div>
<div class="t" style="left:34.50px;top:1002.70px;font-size:27.5px;line-height:35.75px;color:#dcdcdc;font-weight:400;letter-spacing:-0.295px;">ON in JOIN</div>
<div class="r" style="left:466.20000000000005px;top:1006.01px;width:28px;height:28px;background:#4d4d4d;border-radius:6.5px"></div>
<div class="r" style="left:0.00px;top:1042.68px;width:31.30px;height:1.30px;background:#262626;"></div>
<div class="r" style="left:31.30px;top:1042.68px;width:537.60px;height:1.30px;background:#1f1f1f;"></div>
<div class="r" style="left:31.30px;top:1043.88px;width:429.00px;height:42.27px;background:#282828;"></div>
<div class="r" style="left:461.70px;top:1043.88px;width:107.20px;height:42.27px;background:#282828;"></div>
<div class="t" style="left:34.50px;top:1046.17px;font-size:27.5px;line-height:35.75px;color:#dcdcdc;font-weight:400;letter-spacing:-0.238px;">Condition (AND, OR)</div>
<div class="r" style="left:466.20000000000005px;top:1049.48px;width:28px;height:28px;background:#4d4d4d;border-radius:6.5px"></div>
<div class="r" style="left:0.00px;top:1086.15px;width:31.30px;height:1.30px;background:#262626;"></div>
<div class="r" style="left:31.30px;top:1086.15px;width:537.60px;height:1.30px;background:#1f1f1f;"></div>
<div class="r" style="left:31.30px;top:1087.35px;width:429.00px;height:42.27px;background:#282828;"></div>
<div class="r" style="left:461.70px;top:1087.35px;width:107.20px;height:42.27px;background:#282828;"></div>
<div class="t" style="left:34.50px;top:1089.64px;font-size:27.5px;line-height:35.75px;color:#dcdcdc;font-weight:400;letter-spacing:0.149px;">Conditions In Parentheses</div>
<svg class="r" style="left:466.20000000000005px;top:1092.95px" width="28" height="28" viewBox="0 0 28 28"><rect x="0" y="0" width="28" height="28" rx="6.5" fill="#1b67bd"/><path d="M7.6 15.2 L11.4 20.6 L20.6 7.2" fill="none" stroke="#e4ecf6" stroke-width="3.4" stroke-linecap="round" stroke-linejoin="round"/></svg>
<div class="r" style="left:0.00px;top:1129.62px;width:31.30px;height:1.30px;background:#262626;"></div>
<div class="r" style="left:31.30px;top:1129.62px;width:537.60px;height:1.30px;background:#1f1f1f;"></div>
<div class="r" style="left:31.30px;top:1130.82px;width:429.00px;height:42.27px;background:#282828;"></div>
<div class="r" style="left:461.70px;top:1130.82px;width:107.20px;height:42.27px;background:#282828;"></div>
<div class="t" style="left:34.50px;top:1133.11px;font-size:27.5px;line-height:35.75px;color:#dcdcdc;font-weight:400;letter-spacing:-0.266px;">CASE in Parentheses</div>
<div class="r" style="left:466.20000000000005px;top:1136.42px;width:28px;height:28px;background:#4d4d4d;border-radius:6.5px"></div>
<div class="r" style="left:0.00px;top:1173.09px;width:31.30px;height:1.30px;background:#262626;"></div>
<div class="r" style="left:31.30px;top:1173.09px;width:537.60px;height:1.30px;background:#1f1f1f;"></div>
<div class="r" style="left:31.30px;top:1174.29px;width:429.00px;height:42.27px;background:#282828;"></div>
<div class="r" style="left:461.70px;top:1174.29px;width:107.20px;height:42.27px;background:#282828;"></div>
<div class="t" style="left:34.50px;top:1176.58px;font-size:27.5px;line-height:35.75px;color:#dcdcdc;font-weight:400;letter-spacing:-0.96px;">THEN in CASE</div>
<div class="r" style="left:466.20000000000005px;top:1179.89px;width:28px;height:28px;background:#4d4d4d;border-radius:6.5px"></div>
</div>
<div class="r" style="left:1250.00px;top:254.80px;width:23.00px;height:1190.40px;background:#232323;"></div>
<div class="r" style="left:1255.00px;top:259.00px;width:14.00px;height:393.00px;background:#555555;border-radius:7px"></div>
<div class="r" style="left:1273.00px;top:254.80px;width:16.00px;height:1190.40px;background:#1c1c1c;"></div>
<div class="r" style="left:1278.7px;top:836.25px;width:4.3px;height:4.3px;border-radius:50%;background:#cfcfcf"></div>
<div class="r" style="left:1278.7px;top:844.18px;width:4.3px;height:4.3px;border-radius:50%;background:#cfcfcf"></div>
<div class="r" style="left:1278.7px;top:852.11px;width:4.3px;height:4.3px;border-radius:50%;background:#cfcfcf"></div>
<div class="r" style="left:1278.7px;top:860.04px;width:4.3px;height:4.3px;border-radius:50%;background:#cfcfcf"></div>
<div class="t" style="left:1312.70px;top:271.39px;font-size:26px;line-height:33.8px;color:#e6e6e6;font-weight:700;letter-spacing:0.84px;">Sample</div>
<div class="t" style="left:1456.60px;top:269.89px;font-size:27.5px;line-height:35.75px;color:#dedede;font-weight:400;letter-spacing:-0.43px;">SQL Editor</div>
<div class="r" style="left:1289.00px;top:319.00px;width:1199.40px;height:2.00px;background:#333333;"></div>
<div class="r" style="left:1289.00px;top:316.20px;width:144.00px;height:4.60px;background:#1a66c0;"></div>
<div class="r" style="left:1289px;top:324px;width:1200px;height:1121px;box-sizing:border-box;border:2px solid #333333;background:#1e1e1e;overflow:hidden"></div>
<div class="r" style="left:1291.00px;top:326.00px;width:1174.00px;height:35.70px;background:#26272b;"></div>
<div class="r" style="left:2465.00px;top:326.00px;width:22.00px;height:1095.50px;background:#262626;"></div>
<div class="r" style="left:2469.20px;top:330.00px;width:14.00px;height:255.40px;background:#555555;border-radius:7px"></div>
<div class="r" style="left:1291.00px;top:1421.50px;width:1174.00px;height:22.00px;background:#262626;"></div>
<div class="r" style="left:2465.00px;top:1421.50px;width:22.00px;height:22.00px;background:#1e1e1e;"></div>
<div class="r" style="left:1294.80px;top:1425.40px;width:895.00px;height:14.00px;background:#555555;border-radius:7px"></div>
<div class="r" style="left:1291px;top:326px;width:1174px;height:1095.5px;overflow:hidden">
<div class="m" style="left:3.30px;top:2.79px;font-size:26.45px;line-height:32.345px;transform:scaleY(1.1);transform-origin:0 0"><span style="color:#8c8f96;font-style:italic">-- Basic SELECT example, with Sub-SELECT and JOIN</span></div>
<div class="m" style="left:3.30px;top:38.37px;font-size:26.45px;line-height:32.345px;transform:scaleY(1.1);transform-origin:0 0"><span style="color:#cf8e6d">SELECT</span></div>
<div class="m" style="left:3.30px;top:73.95px;font-size:26.45px;line-height:32.345px;transform:scaleY(1.1);transform-origin:0 0"><span style="color:#c2c2c2">    e.LAST_NAME           </span><span style="color:#cf8e6d">AS</span><span style="color:#c2c2c2"> </span><span style="color:#21ae62">"Last Name"</span><span style="color:#c2c2c2">,</span></div>
<div class="m" style="left:3.30px;top:109.53px;font-size:26.45px;line-height:32.345px;transform:scaleY(1.1);transform-origin:0 0"><span style="color:#c2c2c2">    e.FIRST_NAME          </span><span style="color:#cf8e6d">AS</span><span style="color:#c2c2c2"> </span><span style="color:#21ae62">"First Name"</span><span style="color:#c2c2c2">,</span></div>
<div class="m" style="left:3.30px;top:145.11px;font-size:26.45px;line-height:32.345px;transform:scaleY(1.1);transform-origin:0 0"><span style="color:#c2c2c2">    d.DEPARTMENT_NAME     </span><span style="color:#cf8e6d">AS</span><span style="color:#c2c2c2"> </span><span style="color:#21ae62">"Department"</span><span style="color:#c2c2c2">,</span></div>
<div class="m" style="left:3.30px;top:180.69px;font-size:26.45px;line-height:32.345px;transform:scaleY(1.1);transform-origin:0 0"><span style="color:#c2c2c2">    e.SALARY              </span><span style="color:#cf8e6d">AS</span><span style="color:#c2c2c2"> </span><span style="color:#21ae62">"Salary"</span><span style="color:#c2c2c2">,</span></div>
<div class="m" style="left:3.30px;top:216.27px;font-size:26.45px;line-height:32.345px;transform:scaleY(1.1);transform-origin:0 0"><span style="color:#c2c2c2">    e.SALARY + e.SALARY <span style="display:inline-block;position:relative;top:9.5px;transform:scale(1.4,1.3)">*</span> e.COMMISSION_PCT,</span></div>
<div class="m" style="left:3.30px;top:251.85px;font-size:26.45px;line-height:32.345px;transform:scaleY(1.1);transform-origin:0 0"><span style="color:#c2c2c2">    e.COMMISSION_PCT <span style="display:inline-block;position:relative;top:9.5px;transform:scale(1.4,1.3)">*</span> </span><span style="color:#4aa6e6">100</span><span style="color:#c2c2c2"> || </span><span style="color:#21ae62">'%'</span><span style="color:#c2c2c2">,</span></div>
<div class="m" style="left:3.30px;top:287.43px;font-size:26.45px;line-height:32.345px;transform:scaleY(1.1);transform-origin:0 0"><span style="color:#c2c2c2">    ROUND(e.SALARY /</span></div>
<div class="m" style="left:3.30px;top:323.01px;font-size:26.45px;line-height:32.345px;transform:scaleY(1.1);transform-origin:0 0"><span style="color:#c2c2c2">    (   </span><span style="color:#cf8e6d">SELECT</span></div>
<div class="m" style="left:3.30px;top:358.59px;font-size:26.45px;line-height:32.345px;transform:scaleY(1.1);transform-origin:0 0"><span style="color:#c2c2c2">            </span><span style="color:#cf8e6d">MAX</span><span style="color:#c2c2c2">(SALARY)</span></div>
<div class="m" style="left:3.30px;top:394.17px;font-size:26.45px;line-height:32.345px;transform:scaleY(1.1);transform-origin:0 0"><span style="color:#c2c2c2">        </span><span style="color:#cf8e6d">FROM</span></div>
<div class="m" style="left:3.30px;top:429.75px;font-size:26.45px;line-height:32.345px;transform:scaleY(1.1);transform-origin:0 0"><span style="color:#c2c2c2">            HR.EMPLOYEES), </span><span style="color:#4aa6e6">2</span><span style="color:#c2c2c2">) <span style="display:inline-block;position:relative;top:9.5px;transform:scale(1.4,1.3)">*</span> </span><span style="color:#4aa6e6">100</span><span style="color:#c2c2c2"> </span><span style="color:#cf8e6d">AS</span><span style="color:#c2c2c2"> </span><span style="color:#21ae62">"Percentage of Max"</span></div>
<div class="m" style="left:3.30px;top:465.33px;font-size:26.45px;line-height:32.345px;transform:scaleY(1.1);transform-origin:0 0"><span style="color:#cf8e6d">FROM</span></div>
<div class="m" style="left:3.30px;top:500.91px;font-size:26.45px;line-height:32.345px;transform:scaleY(1.1);transform-origin:0 0"><span style="color:#c2c2c2">    HR.EMPLOYEES e</span></div>
<div class="m" style="left:3.30px;top:536.49px;font-size:26.45px;line-height:32.345px;transform:scaleY(1.1);transform-origin:0 0"><span style="color:#cf8e6d">INNER JOIN</span></div>
<div class="m" style="left:3.30px;top:572.07px;font-size:26.45px;line-height:32.345px;transform:scaleY(1.1);transform-origin:0 0"><span style="color:#c2c2c2">    HR.DEPARTMENTS d</span></div>
<div class="m" style="left:3.30px;top:607.65px;font-size:26.45px;line-height:32.345px;transform:scaleY(1.1);transform-origin:0 0"><span style="color:#cf8e6d">ON</span></div>
<div class="m" style="left:3.30px;top:643.23px;font-size:26.45px;line-height:32.345px;transform:scaleY(1.1);transform-origin:0 0"><span style="color:#c2c2c2">    (</span></div>
<div class="m" style="left:3.30px;top:678.81px;font-size:26.45px;line-height:32.345px;transform:scaleY(1.1);transform-origin:0 0"><span style="color:#c2c2c2">        e.DEPARTMENT_ID = d.DEPARTMENT_ID)</span></div>
<div class="m" style="left:3.30px;top:714.39px;font-size:26.45px;line-height:32.345px;transform:scaleY(1.1);transform-origin:0 0"><span style="color:#cf8e6d">WHERE</span></div>
<div class="m" style="left:3.30px;top:749.97px;font-size:26.45px;line-height:32.345px;transform:scaleY(1.1);transform-origin:0 0"><span style="color:#c2c2c2">    d.DEPARTMENT_ID </span><span style="color:#cf8e6d">IN</span><span style="color:#c2c2c2"> (</span><span style="color:#4aa6e6">10</span><span style="color:#c2c2c2">,</span></div>
<div class="m" style="left:3.30px;top:785.55px;font-size:26.45px;line-height:32.345px;transform:scaleY(1.1);transform-origin:0 0"><span style="color:#c2c2c2">                        </span><span style="color:#4aa6e6">20</span><span style="color:#c2c2c2">,</span></div>
<div class="m" style="left:3.30px;top:821.13px;font-size:26.45px;line-height:32.345px;transform:scaleY(1.1);transform-origin:0 0"><span style="color:#c2c2c2">                        </span><span style="color:#4aa6e6">90</span><span style="color:#c2c2c2">,</span></div>
<div class="m" style="left:3.30px;top:856.71px;font-size:26.45px;line-height:32.345px;transform:scaleY(1.1);transform-origin:0 0"><span style="color:#c2c2c2">                        </span><span style="color:#4aa6e6">210</span><span style="color:#c2c2c2">)</span></div>
<div class="m" style="left:3.30px;top:892.29px;font-size:26.45px;line-height:32.345px;transform:scaleY(1.1);transform-origin:0 0"><span style="color:#cf8e6d">AND</span><span style="color:#c2c2c2"> e.SALARY &gt; </span><span style="color:#f1eec3">${Salary}$</span><span style="color:#c2c2c2">;</span></div>
<div class="m" style="left:3.30px;top:927.87px;font-size:26.45px;line-height:32.345px;transform:scaleY(1.1);transform-origin:0 0"><span style="color:#c2c2c2"></span></div>
<div class="m" style="left:3.30px;top:963.45px;font-size:26.45px;line-height:32.345px;transform:scaleY(1.1);transform-origin:0 0"><span style="color:#8c8f96;font-style:italic">-- CASE example</span></div>
<div class="m" style="left:3.30px;top:999.03px;font-size:26.45px;line-height:32.345px;transform:scaleY(1.1);transform-origin:0 0"><span style="color:#cf8e6d">SELECT</span></div>
<div class="m" style="left:3.30px;top:1034.61px;font-size:26.45px;line-height:32.345px;transform:scaleY(1.1);transform-origin:0 0"><span style="color:#c2c2c2">    FIRST_NAME,</span></div>
<div class="m" style="left:3.30px;top:1070.19px;font-size:26.45px;line-height:32.345px;transform:scaleY(1.1);transform-origin:0 0"><span style="color:#c2c2c2">    LAST_NAME,</span></div>
</div>
<div class="r" style="left:22px;top:1495.2px;width:208.8px;height:44.6px;background:#575757;border-radius:8px"></div>
<div class="t" style="left:62.00px;top:1499.59px;font-size:27.5px;line-height:35.75px;color:#e6e6e6;font-weight:400;letter-spacing:0.44px;">Defaults...</div>
<div class="r" style="left:1854.2px;top:1495.2px;width:209.1px;height:44.6px;background:#575757;border-radius:8px"></div>
<div class="t" style="left:1941.50px;top:1499.59px;font-size:27.5px;line-height:35.75px;color:#e6e6e6;font-weight:400;letter-spacing:-1.5px;">OK</div>
<div class="r" style="left:2075.8px;top:1495.2px;width:209.2px;height:44.6px;background:#575757;border-radius:8px"></div>
<div class="t" style="left:2147.50px;top:1499.59px;font-size:27.5px;line-height:35.75px;color:#e6e6e6;font-weight:400;letter-spacing:-0.22px;">Apply</div>
<div class="r" style="left:2296.9px;top:1495.2px;width:209.1px;height:44.6px;background:#575757;border-radius:8px"></div>
<div class="t" style="left:2360.00px;top:1499.59px;font-size:27.5px;line-height:35.75px;color:#e6e6e6;font-weight:400;letter-spacing:-0.31px;">Cancel</div>
<div class="r" style="left:0;top:0;width:2528px;height:1562px;box-sizing:border-box;border:2px solid #555555;border-top-color:#7a7a7a;border-radius:22px;pointer-events:none"></div>
<div class="r" style="left:2520.00px;top:20.00px;width:8.00px;height:102.00px;background:#1c1c1c;"></div>
</div></body></html>
